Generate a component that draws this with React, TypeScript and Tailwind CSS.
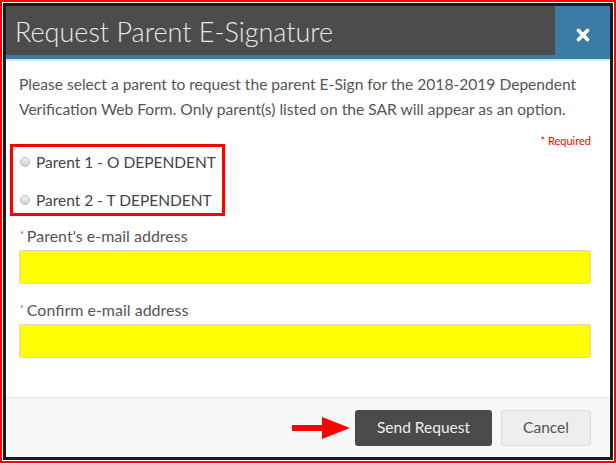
import { X } from 'lucide-react';

function Field({ label }: { label: string }) {
  return (
    <div className="flex flex-col">
      <label className="flex items-start gap-[3px] pl-[1px] text-[16px] leading-[20px] text-[#555]">
        <span className="mt-[2px] text-[9px] leading-[14px] text-[#e53935]">*</span>
        {label}
      </label>
      <div className="mt-[4px] h-[34px] w-full rounded-[2px] border border-[#d8d8c0] bg-[#ffff00]" />
    </div>
  );
}

function Radio({ label }: { label: string }) {
  return (
    <label className="flex items-center gap-[6px] text-[15.5px] leading-[20px] text-[#444]">
      <span className="h-[10px] w-[10px] rounded-full border border-[#bbb] bg-gradient-to-b from-[#f4f4f4] to-[#cfcfcf]" />
      {label}
    </label>
  );
}

export default function App() {
  return (
    <div
      className="h-[463px] w-[616px] border-2 border-[#ff0000] bg-white p-[1px]"
      style={{ fontFamily: 'Lato, "Noto Sans", sans-serif' }}
    >
      <div className="flex h-full flex-col border-[3px] border-[#1b1b1b] bg-white">
        <div className="flex h-[49px]">
          <div className="flex flex-1 items-center whitespace-nowrap bg-[#4c4c4c] pl-[9px] pt-[3px] text-[27px] font-light text-[#e9e9e9]">
            Request Parent E-Signature
          </div>
          <div className="flex w-[55px] items-center justify-center bg-[#3b7ba6] pt-[8px]">
            <X size={18} strokeWidth={5} className="text-white" />
          </div>
        </div>
        <div className="h-[4px] bg-[#3b7ba6]" />
        <div className="h-[2px] bg-[#dce7ee]" />

        <div className="flex flex-1 flex-col pl-[13px] pr-[19px] pt-[11px]">
          <p className="text-[15.6px] leading-[25px] text-[#555]">
            Please select a parent to request the parent E-Sign for the 2018-2019 Dependent
            Verification Web Form. Only parent(s) listed on the SAR will appear as an option.
          </p>
          <div className="mt-[13px] text-right text-[11px] leading-[12px] text-[#ff0000]">* Required</div>
          <div className="-ml-[9px] -mt-[3px] flex w-[215px] flex-col gap-[18px] border-[3px] border-[#ff0000] pb-[3px] pl-[7px] pt-[5px]">
            <Radio label="Parent 1 - O DEPENDENT" />
            <Radio label="Parent 2 - T DEPENDENT" />
          </div>
          <div className="mt-[10px] flex flex-col gap-[16px]">
            <Field label="Parent's e-mail address" />
            <Field label="Confirm e-mail address" />
          </div>
        </div>

        <div className="flex h-[60px] items-center justify-end gap-[9px] border-t border-[#e8e8e8] bg-[#f7f7f7] pr-[19px]">
          <svg width="60" height="26" viewBox="0 0 60 26" className="mr-[-6px]">
            <rect x="0" y="10" width="34" height="6" fill="#ff0000" />
            <polygon points="30,2 58,13 30,24" fill="#ff0000" />
          </svg>
          <button className="h-[36px] w-[137px] rounded-[3px] bg-[#4a4a4a] text-[15.5px] text-[#eee]">
            Send Request
          </button>
          <button className="h-[36px] w-[90px] rounded-[3px] border border-[#ddd] bg-[#eee] text-[15.5px] text-[#555]">
            Cancel
          </button>
        </div>
      </div>
    </div>
  );
}
